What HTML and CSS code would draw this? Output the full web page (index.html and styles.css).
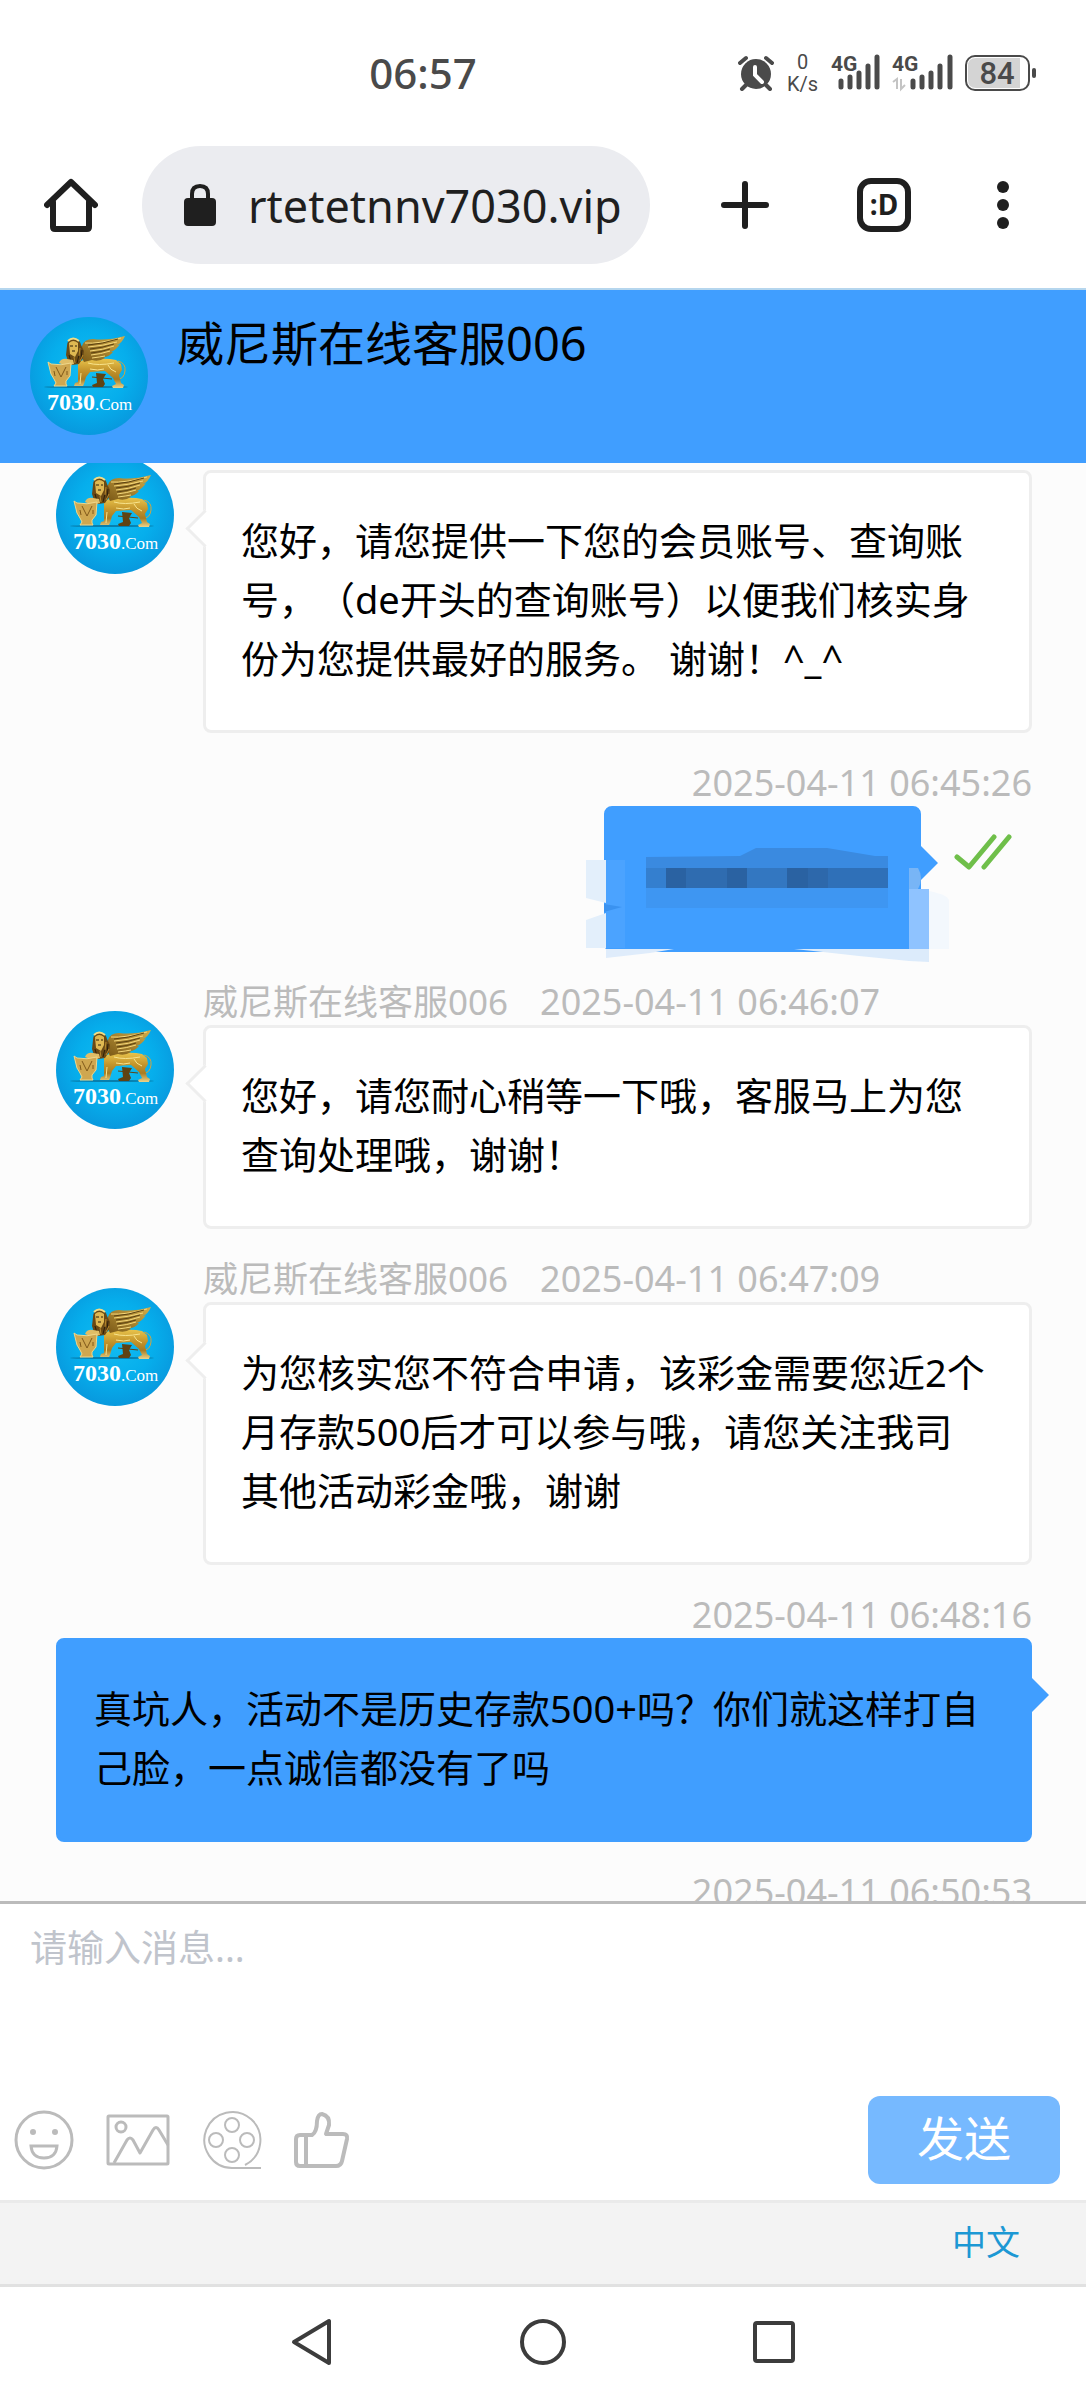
FILE: index.html
```html
<!DOCTYPE html>
<html lang="zh-CN">
<head>
  <meta charset="UTF-8">
  <meta name="viewport" content="width=device-width, initial-scale=1">
  <title>威尼斯在线客服006</title>
  <link rel="stylesheet" href="styles.css">
</head>
<body>

  <!-- 头像 -->
  <svg class="defs" width="0" height="0" aria-hidden="true">
    <defs>
      <radialGradient id="sky" cx="50%" cy="45%" r="55%">
        <stop offset="0" stop-color="#12bdf2"/>
        <stop offset="0.6" stop-color="#06aeec"/>
        <stop offset="1" stop-color="#0899de"/>
      </radialGradient>
      <linearGradient id="gold" x1="0" y1="0" x2="0" y2="1">
        <stop offset="0" stop-color="#e9c44c"/>
        <stop offset="0.4" stop-color="#c4952c"/>
        <stop offset="0.7" stop-color="#a87b22"/>
        <stop offset="1" stop-color="#ecd48a"/>
      </linearGradient>
      <linearGradient id="wing" x1="0" y1="1" x2="1" y2="0">
        <stop offset="0" stop-color="#7a5816"/>
        <stop offset="1" stop-color="#d6b04a"/>
      </linearGradient>
      <symbol id="avatar" viewBox="0 0 118 118">
        <circle cx="59" cy="59" r="59" fill="url(#sky)"/>
        <ellipse cx="56" cy="70" rx="42" ry="1" fill="#077fae"/>
        <path d="M88 44q8 2 7 10t-7 8" fill="none" stroke="#d0a540" stroke-width="1"/>
        <path d="M66 56l10 1-3 5 2 5-2 3h-10l-1-2 5-2z" fill="#5f4313"/>
        <path d="M62 60l20 2" stroke="#5f4313" stroke-width="1"/>
        <path d="M48 46q6-5 18-4 12-1 20 1l5 4 1 6-3 5 2 8 3 2-1 3h-10l-1-2 4-2-3-6-8-7-15 1-4 5-2 7-1 2h-9l1-3 3-1z" fill="url(#gold)"/>
        <path d="M58 46q10 3 26 0M78 48q2 5 8 7M51 56l-1 11M60 52q8 2 14 0" stroke="#f8e48d" stroke-width="1" fill="none"/>
        <path d="M52 29q2-7 11-7 14 2 32-3-3 7-8 9 2 0 3-1-4 6-9 8l2 0q-4 5-9 5l1 1q-6 4-13 2l-8 2q-5-8-2-16z" fill="url(#wing)"/>
        <path d="M55 26q14 1 36-5M58 30q14-1 29-5M60 34q13-1 24-5M61 38q10-1 19-4M62 41q8-1 13-2" stroke="#f5d87b" stroke-width="1" fill="none"/>
        <path d="M58 28q14-1 30-6M60 32q12-1 24-5M61 36q10-1 19-4" stroke="#5a4112" stroke-width="1" fill="none"/>
        <path d="M37 29q0-7 7-7 6 0 7 6l3 6-1 7-4 6-7 1-4-4-2-6z" fill="#6a4915"/>
        <path d="M39 26q4-4 9 0l0 8-3 6-5-3z" fill="#dfb852"/>
        <path d="M40 29h3M45 29h2M42 34h3M52 33l-1 9M49 38l-2 8M39 38l2 7" stroke="#2c1e0b" stroke-width="1"/>
        <path d="M50 31l-1 8M44 40l1 6M53 38l-3 6" stroke="#b98a2c" stroke-width="1"/>
        <path d="M38 24q5-5 11 0" stroke="#f3dc84" stroke-width="2" fill="none"/>
        <path d="M29 46q2-5 8-4l6 1 1 4-8 2z" fill="#e0bd66"/>
        <path d="M18 45l3 2q10 2 20-1l-1 13-4 5 0 3 1 2H24l2-3-2-4-3-5z" fill="#cfa750" stroke="#f0d78a" stroke-width="1"/>
        <path d="M26 50l5 10 5-10M24 54l1 5M37 54v4" stroke="#80591a" stroke-width="1" fill="none"/>
        <text class="avatar-num" x="17" y="93">7030</text>
        <text class="avatar-com" x="65" y="93">.Com</text>
      </symbol>
    </defs>
  </svg>

  <!-- 状态栏 -->
  <div class="status-bar">
    <span class="clock">06:57</span>
    <div class="status-icons">
      <svg width="36" height="36" viewBox="0 0 36 36">
        <circle cx="18" cy="19" r="15" fill="#4a4a4a"/>
        <path d="M2 8l6-5M34 8l-6-5M8 30l-4 4M28 30l4 4" stroke="#4a4a4a" stroke-width="4" stroke-linecap="round"/>
        <path d="M17 12v8l7 7" fill="none" stroke="#fff" stroke-width="4" stroke-linecap="round"/>
      </svg>
      <div class="speed"><span>0</span><span>K/s</span></div>
      <svg width="49" height="44" viewBox="0 0 49 44">
        <text class="net" x="0" y="20">4G</text>
        <path d="M10 30v6M19 26v10M28 22v14M37 15v21M46 6v30" stroke="#4a4a4a" stroke-width="5" stroke-linecap="round"/>
      </svg>
      <svg width="61" height="44" viewBox="0 0 61 44">
        <text class="net" x="0" y="20">4G</text>
        <path d="M1 31l4-3v10M9 28v10l4-4" fill="none" stroke="#c4c4c4" stroke-width="2"/>
        <path d="M21 30v6M30 26v10M39 22v14M48 15v21M58 6v30" stroke="#4a4a4a" stroke-width="5" stroke-linecap="round"/>
      </svg>
      <svg width="72" height="38" viewBox="0 0 72 38">
        <rect x="1" y="2" width="63" height="34" rx="9" fill="#fff" stroke="#4a4a4a" stroke-width="2"/>
        <path d="M11 4h44v30H11q-8 0-8-8V12q0-8 8-8z" fill="#d4d4d4"/>
        <path d="M69 16v6" stroke="#4a4a4a" stroke-width="4" stroke-linecap="round"/>
        <text class="battery-num" x="32" y="30" text-anchor="middle">84</text>
      </svg>
    </div>
  </div>

  <!-- 浏览器地址栏 -->
  <div class="browser-bar">
    <button class="icon-btn" aria-label="主页">
      <svg width="54" height="54" viewBox="0 0 54 54" fill="none" stroke="#1f1f1f" stroke-width="6" stroke-linejoin="round" stroke-linecap="round">
        <path d="M3 27L27 4l24 23"/>
        <path d="M9 24v25q0 2 2 2h32q2 0 2-2V24"/>
      </svg>
    </button>
    <div class="url">
      <svg width="32" height="44" viewBox="0 0 32 44">
        <path d="M8 16v-5q0-8 8-8t8 8v5" fill="none" stroke="#1f1f1f" stroke-width="4"/>
        <rect x="0" y="15" width="32" height="28" rx="4" fill="#1f1f1f"/>
      </svg>
      <span>rtetetnnv7030.vip</span>
    </div>
    <div class="browser-actions">
      <button class="icon-btn" aria-label="新标签页">
        <svg width="54" height="54" viewBox="0 0 54 54">
          <path d="M6 27h42M27 6v42" stroke="#1f1f1f" stroke-width="6" stroke-linecap="round"/>
        </svg>
      </button>
      <button class="icon-btn" aria-label="标签页">
        <svg width="54" height="54" viewBox="0 0 54 54">
          <rect x="3" y="3" width="48" height="48" rx="11" fill="none" stroke="#1f1f1f" stroke-width="6"/>
          <text class="tab-face" x="27" y="37" text-anchor="middle">:D</text>
        </svg>
      </button>
      <button class="icon-btn" aria-label="更多">
        <svg width="14" height="54" viewBox="0 0 14 54" fill="#1f1f1f">
          <circle cx="7" cy="9" r="6"/>
          <circle cx="7" cy="27" r="6"/>
          <circle cx="7" cy="45" r="6"/>
        </svg>
      </button>
    </div>
  </div>

  <header class="chat-header">
    <svg class="avatar"><use href="#avatar"/></svg>
    <h1>威尼斯在线客服006</h1>
  </header>

  <main class="chat">
    <div class="chat-log">
      <div class="msg">
        <svg class="avatar"><use href="#avatar"/></svg>
        <div class="msg-body">
          <div class="meta"></div>
          <div class="bubble">您好，请您提供一下您的会员账号、查询账号，（de开头的查询账号）以便我们核实身份为您提供最好的服务。 谢谢！^_^</div>
        </div>
      </div>

      <div class="msg mine">
        <div class="msg-body">
          <div class="meta"><time>2025-04-11 06:45:26</time></div>
          <div class="sent">
            <div class="bubble masked">
              <!-- 打码 -->
              <svg class="mosaic" width="412" height="165" viewBox="0 0 412 165">
                <path d="M46 54h20v43l-20-5zM46 114l20-7v35H46z" fill="#e3effb"/>
                <path d="M66 54h19v88H66z" fill="#4ba3ff"/>
                <path d="M64 98l18 3-18 5z" fill="#3a92f0"/>
                <path d="M106 51l94-1 16-8h71l48 8h13v12H106z" fill="#3a8ae0"/>
                <path d="M106 82h242v20H106z" fill="#3e96f2"/>
                <path d="M106 62h20v20h-20z" fill="#347fcf"/>
                <path d="M126 62h20v20h-20zM187 62h20v20h-20zM247 62h21v20h-21z" fill="#2a62a2"/>
                <path d="M146 62h41v20h-41z" fill="#2f6cb0"/>
                <path d="M207 62h40v20h-40z" fill="#3377c1"/>
                <path d="M268 62h20v20h-20z" fill="#2d68ab"/>
                <path d="M288 62h60v20h-60z" fill="#2f70b8"/>
                <path d="M369 62h9q6 10 0 21h-9z" fill="#78b5f6"/>
                <path d="M369 83h20v60h-20z" fill="#8fc3ff"/>
                <path d="M389 85q20 4 20 10v48h-20z" fill="#f3f8fd"/>
                <path d="M66 143h68l-24 4-44 5z" fill="#dfecfb"/>
                <path d="M254 143h135v13l-20-1-50-5-36-4z" fill="#dcebfb"/>
              </svg>
            </div>
            <svg class="read" width="58" height="36" viewBox="0 0 58 36" fill="none" stroke="#6fbf4a" stroke-width="5" stroke-linecap="round" stroke-linejoin="round">
              <path d="M3 23l12 10L40 3"/>
              <path d="M30 33L55 3"/>
            </svg>
          </div>
        </div>
      </div>

      <div class="msg">
        <svg class="avatar"><use href="#avatar"/></svg>
        <div class="msg-body">
          <div class="meta"><span class="name">威尼斯在线客服006</span><time>2025-04-11 06:46:07</time></div>
          <div class="bubble">您好，请您耐心稍等一下哦，客服马上为您查询处理哦，谢谢！</div>
        </div>
      </div>

      <div class="msg">
        <svg class="avatar"><use href="#avatar"/></svg>
        <div class="msg-body">
          <div class="meta"><span class="name">威尼斯在线客服006</span><time>2025-04-11 06:47:09</time></div>
          <div class="bubble">为您核实您不符合申请，该彩金需要您近2个月存款500后才可以参与哦，请您关注我司其他活动彩金哦，谢谢</div>
        </div>
      </div>

      <div class="msg mine">
        <div class="msg-body">
          <div class="meta"><time>2025-04-11 06:48:16</time></div>
          <div class="bubble">真坑人，活动不是历史存款500+吗？你们就这样打自己脸，一点诚信都没有了吗</div>
        </div>
      </div>

      <div class="msg mine">
        <div class="msg-body">
          <div class="meta"><time>2025-04-11 06:50:53</time></div>
        </div>
      </div>
    </div>
  </main>

  <form class="composer">
    <textarea placeholder="请输入消息..." aria-label="消息"></textarea>
    <div class="tools">
      <button type="button" class="icon-btn" aria-label="表情">
        <svg width="60" height="60" viewBox="0 0 60 60" fill="none" stroke="#bbb" stroke-width="3">
          <circle cx="30" cy="30" r="28"/>
          <circle cx="19" cy="22" r="3" fill="#bbb" stroke="none"/>
          <circle cx="41" cy="22" r="3" fill="#bbb" stroke="none"/>
          <path d="M17 36h26q-1 12-13 12T17 36z"/>
        </svg>
      </button>
      <button type="button" class="icon-btn" aria-label="图片">
        <svg width="64" height="60" viewBox="0 0 64 60" fill="none" stroke="#bbb" stroke-width="3" stroke-linejoin="round">
          <rect x="2" y="6" width="60" height="48" rx="1"/>
          <circle cx="15" cy="17" r="5"/>
          <path d="M8 53l13-23q3-4 6 0l7 13 13-23q3-5 6 0l9 15"/>
        </svg>
      </button>
      <button type="button" class="icon-btn" aria-label="视频">
        <svg width="60" height="60" viewBox="0 0 60 60" fill="none" stroke="#bbb" stroke-width="2">
          <path d="M59 58H30A28 28 0 1 1 43 55"/>
          <circle cx="30" cy="15" r="7"/>
          <circle cx="14" cy="30" r="7"/>
          <circle cx="45" cy="30" r="7"/>
          <circle cx="30" cy="45" r="7"/>
        </svg>
      </button>
      <button type="button" class="icon-btn" aria-label="评价">
        <svg width="56" height="60" viewBox="0 0 56 60" fill="none" stroke="#bbb" stroke-width="4" stroke-linejoin="round">
          <path d="M12 25h6q5-3 5-14 1-7 5-7 8 2 7 11l-3 9h17q5 0 4 5l-5 22q-1 5-6 5H6q-4 0-4-4V29q0-4 4-4z"/>
          <path d="M12 25v31"/>
        </svg>
      </button>
      <button type="submit" class="send">发送</button>
    </div>
  </form>

  <div class="lang-bar"><a href="#">中文</a></div>

  <nav class="system-nav">
    <button class="icon-btn" aria-label="返回">
      <svg width="48" height="48" viewBox="0 0 48 48" fill="none" stroke="#3c3c3c" stroke-width="4" stroke-linejoin="round">
        <path d="M41 3v42L6 24z"/>
      </svg>
    </button>
    <button class="icon-btn" aria-label="桌面">
      <svg width="48" height="48" viewBox="0 0 48 48" fill="none" stroke="#3c3c3c" stroke-width="4">
        <circle cx="24" cy="24" r="21"/>
      </svg>
    </button>
    <button class="icon-btn" aria-label="最近任务">
      <svg width="48" height="48" viewBox="0 0 48 48" fill="none" stroke="#3c3c3c" stroke-width="4">
        <rect x="5" y="5" width="38" height="38" rx="2"/>
      </svg>
    </button>
  </nav>

</body>
</html>
```
FILE: styles.css
```css
* {
  box-sizing: border-box;
}
body {
  margin: 0;
  height: 100vh;
  display: flex;
  flex-direction: column;
  background: #fff;
  color: #000;
  font-family: "Noto Sans", "Noto Sans CJK SC", sans-serif;
  text-spacing-trim: space-all;
}
svg {
  display: block;
  flex: none;
}
.defs {
  position: absolute;
}
.icon-btn {
  padding: 0;
  border: none;
  background: none;
  cursor: pointer;
}

/* 状态栏 */
.status-bar {
  display: flex;
  justify-content: space-between;
  align-items: center;
  height: 146px;
  padding: 0 49px 0 34%;
  color: #4a4a4a;
}
.clock {
  font-size: 42px;
  line-height: 48px;
  font-weight: 500;
}
.status-icons {
  display: flex;
  align-items: center;
  gap: 12px;
}
.speed {
  display: flex;
  flex-direction: column;
  align-items: center;
  width: 33px;
  font-family: Roboto, sans-serif;
  font-size: 20px;
  line-height: 22px;
}
.net {
  font-family: Roboto, sans-serif;
  font-size: 21px;
  font-weight: 700;
  fill: #4a4a4a;
}
.battery-num {
  font-family: Roboto, sans-serif;
  font-size: 31px;
  font-weight: 500;
  fill: #4a4a4a;
}

/* 地址栏 */
.browser-bar {
  display: flex;
  align-items: center;
  gap: 44px;
  padding: 0 76px 24px 44px;
  border-bottom: 2px solid #b5d6ee;
}
.url {
  flex: 1;
  display: flex;
  align-items: center;
  gap: 32px;
  height: 118px;
  padding: 0 24px 0 42px;
  border-radius: 59px;
  background: #ebecf0;
  color: #1f1f1f;
  font-size: 45px;
}
.browser-actions {
  display: flex;
  gap: 85px;
  margin-left: 24px;
}
.tab-face {
  font-family: "Noto Sans", sans-serif;
  font-size: 28px;
  font-weight: 700;
  fill: #1f1f1f;
}

/* 客服信息 */
.chat-header {
  display: flex;
  gap: 29px;
  padding: 27px 30px 28px;
  background: #409eff;
}
.chat-header h1 {
  margin: 0;
  font-size: 47px;
  font-weight: 400;
  line-height: 52px;
}
.avatar {
  width: 118px;
  height: 118px;
}
.avatar-num,
.avatar-com {
  font-family: "Liberation Serif", serif;
  fill: #fff;
}
.avatar-num {
  font-size: 24px;
  font-weight: 700;
}
.avatar-com {
  font-size: 17px;
}

/* 聊天记录 */
.chat {
  flex: 1;
  min-height: 0;
  overflow: hidden;
  background: #fcfcfc;
}
.chat-log {
  display: flex;
  flex-direction: column;
  gap: 27px;
  margin-top: -39px;
  padding: 0 54px 0 56px;
}
.msg {
  display: flex;
  gap: 29px;
}
.msg .avatar {
  margin-top: 32px;
}
.msg-body {
  flex: 1;
  min-width: 0;
}
.meta {
  display: flex;
  gap: 32px;
  height: 46px;
  line-height: 46px;
  color: #bbb;
}
.name {
  font-size: 35px;
}
.meta time {
  font-size: 36px;
}
.mine .meta {
  justify-content: flex-end;
}
.bubble {
  position: relative;
  padding: 38px 40px 42px 35px;
  border: 3px solid #eee;
  border-radius: 8px;
  background: #fff;
  font-size: 38px;
  line-height: 59px;
}
.bubble::before {
  content: "";
  position: absolute;
  top: 42px;
  left: -15px;
  width: 24px;
  height: 24px;
  border: solid #eee;
  border-width: 0 0 3px 3px;
  background: #fff;
  transform: rotate(45deg);
}
.mine .bubble {
  border-color: #409eff;
  background: #409eff;
}
.mine .bubble::before {
  left: auto;
  right: -15px;
  border: none;
  background: #409eff;
}
.sent {
  display: flex;
  justify-content: flex-end;
  gap: 33px;
}
.masked {
  width: 317px;
  height: 146px;
}
.mosaic {
  position: absolute;
  top: -3px;
  left: -67px;
}
.read {
  margin: 28px 20px 0 0;
}

/* 输入区 */
.composer {
  border-top: 3px solid #bbb;
}
.composer textarea {
  display: block;
  width: 100%;
  height: 176px;
  padding: 14px 30px;
  border: none;
  outline: none;
  resize: none;
  font-family: inherit;
  font-size: 37px;
  line-height: 59px;
}
.composer textarea::placeholder {
  color: #c0c4cc;
}
.tools {
  display: flex;
  align-items: center;
  gap: 32px;
  padding: 16px 26px 16px 14px;
}
.send {
  width: 192px;
  height: 88px;
  margin-left: auto;
  padding: 0 0 4px;
  border: none;
  border-radius: 12px;
  background: #76b9ff;
  color: #fff;
  font-family: inherit;
  font-size: 47px;
  line-height: 80px;
}

.lang-bar {
  display: flex;
  justify-content: flex-end;
  align-items: center;
  height: 87px;
  padding: 0 66px 4px;
  border-top: 3px solid #eaeaea;
  border-bottom: 3px solid #e1e1e1;
  background: #f3f3f3;
}
.lang-bar a {
  color: #1c98d4;
  font-size: 34px;
  line-height: 48px;
  text-decoration: none;
}

.system-nav {
  display: flex;
  justify-content: center;
  align-items: center;
  gap: 183px;
  height: 113px;
  padding-bottom: 4px;
}
```
